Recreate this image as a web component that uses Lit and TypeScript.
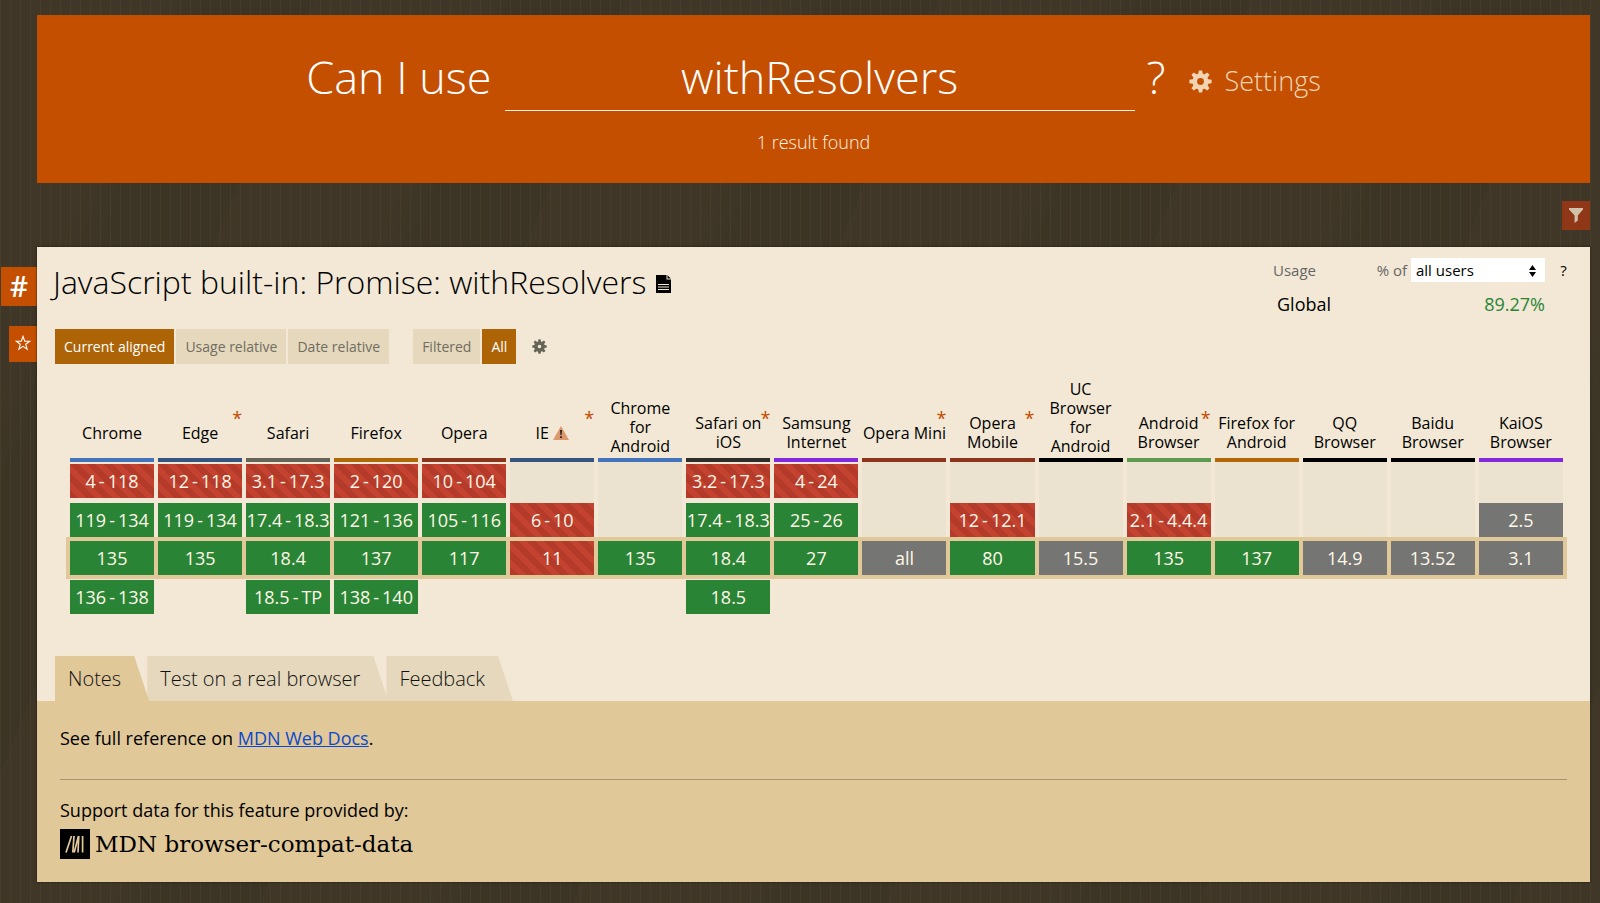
import { LitElement, html, svg, css, nothing } from "lit";
import { customElement, property, state } from "lit/decorators.js";
import { classMap } from "lit/directives/class-map.js";

type Support = "y" | "n" | "u";
type Cell = [string, Support] | null;

interface Browser {
  name: string;
  bar: string;
  star?: boolean;
  warn?: boolean;
  cells: [Cell, Cell, Cell, Cell];
}

const y = (v: string): Cell => [v, "y"];
const n = (v: string): Cell => [v, "n"];
const u = (v: string): Cell => [v, "u"];

const BROWSERS: Browser[] = [
  { name: "Chrome", bar: "blue", cells: [n("4 - 118"), y("119 - 134"), y("135"), y("136 - 138")] },
  { name: "Edge", bar: "navy", star: true, cells: [n("12 - 118"), y("119 - 134"), y("135"), null] },
  { name: "Safari", bar: "gray", cells: [n("3.1 - 17.3"), y("17.4 - 18.3"), y("18.4"), y("18.5 - TP")] },
  { name: "Firefox", bar: "orange", cells: [n("2 - 120"), y("121 - 136"), y("137"), y("138 - 140")] },
  { name: "Opera", bar: "red", cells: [n("10 - 104"), y("105 - 116"), y("117"), null] },
  { name: "IE", bar: "navy", star: true, warn: true, cells: [null, n("6 - 10"), n("11"), null] },
  { name: "Chrome for Android", bar: "blue", cells: [null, null, y("135"), null] },
  { name: "Safari on iOS", bar: "dark", star: true, cells: [n("3.2 - 17.3"), y("17.4 - 18.3"), y("18.4"), y("18.5")] },
  { name: "Samsung Internet", bar: "purple", cells: [n("4 - 24"), y("25 - 26"), y("27"), null] },
  { name: "Opera Mini", bar: "red", star: true, cells: [null, null, u("all"), null] },
  { name: "Opera Mobile", bar: "red", star: true, cells: [null, n("12 - 12.1"), y("80"), null] },
  { name: "UC Browser for Android", bar: "black", cells: [null, null, u("15.5"), null] },
  { name: "Android Browser", bar: "green", star: true, cells: [null, n("2.1 - 4.4.4"), y("135"), null] },
  { name: "Firefox for Android", bar: "orange", cells: [null, null, y("137"), null] },
  { name: "QQ Browser", bar: "black", cells: [null, null, u("14.9"), null] },
  { name: "Baidu Browser", bar: "black", cells: [null, null, u("13.52"), null] },
  { name: "KaiOS Browser", bar: "purple", cells: [null, u("2.5"), u("3.1"), null] },
];

const GEAR_TEETH = [0, 45, 90, 135, 180, 225, 270, 315];
const gear = (hole: number) => html`<svg class="gear" viewBox="0 0 24 24" aria-hidden="true">
  <path
    fill="currentColor"
    fill-rule="evenodd"
    d="M12 3.6a8.4 8.4 0 1 0 0 16.8a8.4 8.4 0 1 0 0-16.8zM12 ${12 - hole}a${hole} ${hole} 0 1 1 0 ${hole * 2}a${hole} ${hole} 0 1 1 0-${hole * 2}z"
  />
  ${GEAR_TEETH.map((a) => svg`<path fill="currentColor" transform="rotate(${a} 12 12)" d="M10.3 0.4h3.4l1 5h-5.4z" />`)}
</svg>`;

@customElement("support-table")
export class SupportTable extends LitElement {
  @property({ attribute: false }) browsers: Browser[] = [];

  static styles = css`
    :host { display: block; }
    table { width: 100%; table-layout: fixed; border-collapse: separate; border-spacing: 0; color: #000; }
    th { position: relative; padding: 0; border: solid #f2e8d5; border-width: 0 2px; font-weight: 400; vertical-align: bottom; }
    .name { display: flex; align-items: center; justify-content: center; gap: 4px; box-sizing: border-box; min-height: 46px; margin-bottom: 2px; padding: 0 2px; font-size: 16px; line-height: 19px; }
    .name.wide { padding: 0; white-space: nowrap; }
    .name svg { width: 16px; height: 14px; flex: none; }
    .star { position: absolute; bottom: 38px; right: 0; font-size: 18px; line-height: 12px; color: #c44b00; }
    .bar { height: 4px; }
    .blue { background: #4373bb; }
    .navy { background: #34557f; }
    .gray { background: #666459; }
    .orange { background: #b16607; }
    .red { background: #89341b; }
    .dark { background: #302f27; }
    .purple { background: #8329dc; }
    .black { background: #000; }
    .green { background: #5c9a50; }
    td { padding: 0; border: solid #f2e8d5; border-width: 0 2px; text-align: center; vertical-align: top; }
    .r0 td { padding: 2px 0 5px; }
    .r0 td.none, .r1 td.none { background: #ebe2d0; background-clip: padding-box; }
    .r2 td { padding: 4px 0; background: #e0c899; border-color: #e0c899; }
    .r2 td:first-child { box-shadow: -2px 0 #e0c899; }
    .r2 td:last-child { box-shadow: 2px 0 #e0c899; }
    .r3 td { padding-top: 1px; }
    .cell { display: block; height: 34px; font-size: 18px; line-height: 34px; color: #fff8e8; white-space: nowrap; overflow: hidden; }
    .cell i { font-style: normal; padding: 0 3px; }
    .y { background: #2a8436; }
    .u { background: #757573; }
    .n { background: repeating-linear-gradient(45deg, #b43a2a 0 6px, #c44230 6px 12px); }
  `;

  private version(text: string) {
    const [from, to] = text.split(" - ");
    return to ? html`${from}<i>-</i>${to}` : from;
  }

  render() {
    return html`<table>
      <thead>
        <tr>
          ${this.browsers.map(
            (b) => html`<th scope="col">
              <div class=${classMap({ name: true, wide: b.name === "Opera Mini" })}>
                <span>${b.name}</span>
                ${b.warn
                  ? html`<svg viewBox="0 0 16 14" aria-label="Discontinued">
                      <path d="M8 0L16 14H0z" fill="#dd976c" />
                      <path d="M7 4h2l-.4 5H7.4zM7.1 10.2h1.8v1.8H7.1z" fill="#222" />
                    </svg>`
                  : nothing}
              </div>
              <div class="bar ${b.bar}"></div>
              ${b.star ? html`<span class="star">*</span>` : nothing}
            </th>`
          )}
        </tr>
      </thead>
      <tbody>
        ${[0, 1, 2, 3].map(
          (r) => html`<tr class="r${r}">
            ${this.browsers.map((b) => {
              const c = b.cells[r];
              return c
                ? html`<td><span class="cell ${c[1]}">${this.version(c[0])}</span></td>`
                : html`<td class="none"></td>`;
            })}
          </tr>`
        )}
      </tbody>
    </table>`;
  }
}

@customElement("app-root")
export class AppRoot extends LitElement {
  @state() private view = "Current aligned";
  @state() private scope = "All";
  @state() private tab = "Notes";

  static styles = css`
    :host {
      display: block; box-sizing: border-box; min-height: 100vh; padding: 15px 10px 20px 0;
      font-family: "Open Sans", "Noto Sans", sans-serif; font-size: 18px; color: #000;
      background:
        repeating-linear-gradient(90deg, rgba(90, 78, 58, 0.3) 0 1px, transparent 1px 10px),
        repeating-linear-gradient(112deg, rgba(80, 68, 48, 0.16) 0 150px, transparent 190px 290px),
        #3c3425;
    }
    button { font: inherit; border: 0; padding: 0; margin: 0; cursor: pointer; background: none; color: inherit; }
    a { color: #0a48cd; }
    .hero { margin-left: 37px; height: 168px; box-sizing: border-box; padding-top: 32px; background: #c54f00; color: #fff; text-align: center; }
    .search { display: flex; justify-content: center; font-size: 45px; font-weight: 300; line-height: 60px; height: 64px; }
    .search label { margin-right: 13px; }
    .search input { flex: 0 1 630px; min-width: 0; box-sizing: border-box; height: 64px; padding: 0 0 5px; border: 0; border-bottom: 1px solid #fff3e0; background: none; color: #fff; font: inherit; line-height: 58px; text-align: center; outline: none; }
    .mark { margin: 0 24px 0 12px; }
    .settings { display: flex; align-items: center; gap: 12px; font-size: 27px; line-height: 36px; font-weight: 300; color: #f0d5b4; text-decoration: none; padding-top: 4px; }
    .settings .gear { width: 23px; height: 23px; }
    .found { margin: 18px 0 0; font-size: 18px; line-height: 26px; font-weight: 300; color: #fff4e2; }
    .filterbar { display: flex; justify-content: flex-end; padding: 18px 0 17px; }
    .filter { width: 28px; height: 29px; display: grid; place-items: center; background: #8f3716; color: #cfc2a8; }
    .filter svg { width: 14px; height: 15px; }
    .entry { display: flex; align-items: flex-start; }
    .side { width: 37px; flex: none; display: flex; flex-direction: column; align-items: flex-end; gap: 20px; padding-top: 20px; }
    .hash { width: 36px; height: 39px; display: grid; place-items: center; background: #c54f00; color: #fff; font-size: 28px; font-weight: 600; line-height: 39px; text-decoration: none; }
    .fav { width: 28px; height: 36px; display: grid; place-items: center; background: #c54f00; color: #fff; }
    .fav svg { width: 16px; height: 16px; margin-bottom: 2px; }
    .card { flex: 1; min-width: 0; background: #f2e8d5; box-shadow: 0 0 2px #1d1a12; }
    .top { display: flex; justify-content: space-between; padding: 11px 22px 0 16px; }
    h1 { display: flex; align-items: center; gap: 10px; margin: 0; height: 48px; font-size: 32px; line-height: 48px; font-weight: 300; }
    h1 svg { width: 15px; height: 18px; margin-top: 4px; }
    .usage { width: 295px; }
    .pick { display: flex; align-items: center; font-size: 15px; line-height: 24px; color: #666; }
    .pick .of { margin-left: auto; margin-right: 4px; }
    .select { position: relative; width: 134px; height: 24px; }
    .select select { width: 100%; height: 24px; appearance: none; border: 0; border-radius: 0; margin: 0; padding: 0 5px; background: #fff; color: #000; font: inherit; line-height: 24px; }
    .select svg { position: absolute; right: 9px; top: 7px; width: 7px; height: 12px; pointer-events: none; }
    .help { width: 23px; padding-left: 14px; box-sizing: border-box; color: #000; }
    .global { display: flex; justify-content: space-between; margin: 9px 23px 0 4px; font-size: 18px; line-height: 26px; }
    .global b { font-weight: 400; color: #2a8436; }
    .modes { display: flex; align-items: center; padding: 12px 18px 0; font-size: 14px; line-height: 35px; }
    .group { display: flex; gap: 2px; margin-right: 24px; }
    .group button { padding: 0 9px; height: 35px; background: #e5d8bc; color: #706d62; }
    .group button.on { background: #ad6407; color: #fff; }
    .cog { width: 15px; height: 15px; margin-left: -8px; color: #666458; }
    .cog .gear { display: block; width: 15px; height: 15px; }
    .data { display: block; margin: 16px 25px 0 31px; }
    .tabs { display: flex; padding: 42px 18px 0; }
    .tabs button { height: 45px; padding: 0 28px 0 13px; font-size: 20px; line-height: 45px; font-weight: 300; color: #111; background: #e5d8bc; clip-path: polygon(0 0, calc(100% - 15px) 0, 100% 100%, 0 100%); }
    .tabs button + button { margin-left: -2px; }
    .tabs button.on { position: relative; z-index: 1; background: #e0c899; }
    .panel { padding: 23px; background: #e0c899; line-height: 28px; }
    .panel p { margin: 0; }
    hr { height: 1px; margin: 27px 0 16px; border: 0; background: #a89474; }
    .mdn { display: flex; align-items: center; gap: 5px; margin-top: 5px; color: #000; text-decoration: none; font-family: "DejaVu Serif", serif; font-size: 23px; line-height: 30px; }
    .mdn svg { width: 30px; height: 30px; flex: none; }
  `;

  private group(items: string[], current: string, pick: (v: string) => void) {
    return html`<div class="group">
      ${items.map((i) => html`<button class=${classMap({ on: i === current })} @click=${() => pick(i)}>${i}</button>`)}
    </div>`;
  }

  render() {
    return html`
      <header class="hero">
        <form class="search" @submit=${(e: Event) => e.preventDefault()}>
          <label for="q">Can I use</label>
          <input id="q" type="text" value="withResolvers" autocomplete="off" spellcheck="false" />
          <span class="mark">?</span>
          <a class="settings" href="#settings">${gear(3.6)}<span>Settings</span></a>
        </form>
        <p class="found">1 result found</p>
      </header>
      <div class="filterbar">
        <button class="filter" aria-label="Filter">
          <svg viewBox="0 0 14 15"><path d="M0 0h14v1.6L8.8 7.4v5L5.6 15V7.4L0 1.6z" fill="currentColor" /></svg>
        </button>
      </div>
      <div class="entry">
        <div class="side">
          <a class="hash" href="#feature">#</a>
          <button class="fav" aria-label="Favourite">
            <svg viewBox="0 0 16 16">
              <path d="M8 1.4l1.7 4.7 5 .1-4 3.1 1.4 4.8L8 11.3l-4.1 2.8 1.4-4.8-4-3.1 5-.1z" fill="none" stroke="currentColor" stroke-width="1.1" />
            </svg>
          </button>
        </div>
        <main class="card">
          <div class="top">
            <h1>
              JavaScript built-in: Promise: withResolvers
              <svg viewBox="0 0 15 18" aria-hidden="true">
                <path d="M0 0h10.5v4.5H15V18H0zM11.5 0.2L14.8 3.5h-3.3z" />
                <path d="M2 9.5h11M2 12h11M2 14.5h11" stroke="#f2e8d5" stroke-width="1" />
              </svg>
            </h1>
            <section class="usage">
              <div class="pick">
                <span>Usage</span>
                <label class="of" for="who">% of</label>
                <span class="select">
                  <select id="who"><option>all users</option></select>
                  <svg viewBox="0 0 7 12" aria-hidden="true"><path d="M3.5 0L7 5H0zM3.5 12L7 7H0z" /></svg>
                </span>
                <button class="help">?</button>
              </div>
              <div class="global"><span>Global</span><b>89.27%</b></div>
            </section>
          </div>
          <div class="modes">
            ${this.group(["Current aligned", "Usage relative", "Date relative"], this.view, (v) => (this.view = v))}
            ${this.group(["Filtered", "All"], this.scope, (v) => (this.scope = v))}
            <button class="cog" aria-label="Display options">${gear(2.8)}</button>
          </div>
          <support-table class="data" .browsers=${BROWSERS}></support-table>
          <nav class="tabs">
            ${["Notes", "Test on a real browser", "Feedback"].map(
              (t) => html`<button class=${classMap({ on: t === this.tab })} @click=${() => (this.tab = t)}>${t}</button>`
            )}
          </nav>
          <div class="panel">
            <p>See full reference on <a href="#mdn">MDN Web Docs</a>.</p>
            <hr />
            <p>Support data for this feature provided by:</p>
            <a class="mdn" href="#bcd">
              <svg viewBox="0 0 30 30" aria-hidden="true">
                <path d="M0 0h30v30H0z" />
                <path d="M6 23.5L11.5 7M14 7L12.8 23.5M14.2 23.5L18.5 7M18.8 7L18 23.5M22.6 7V23.5" stroke="#e0c899" stroke-width="1.7" fill="none" />
              </svg>
              <span>MDN browser-compat-data</span>
            </a>
          </div>
        </main>
      </div>
    `;
  }
}
